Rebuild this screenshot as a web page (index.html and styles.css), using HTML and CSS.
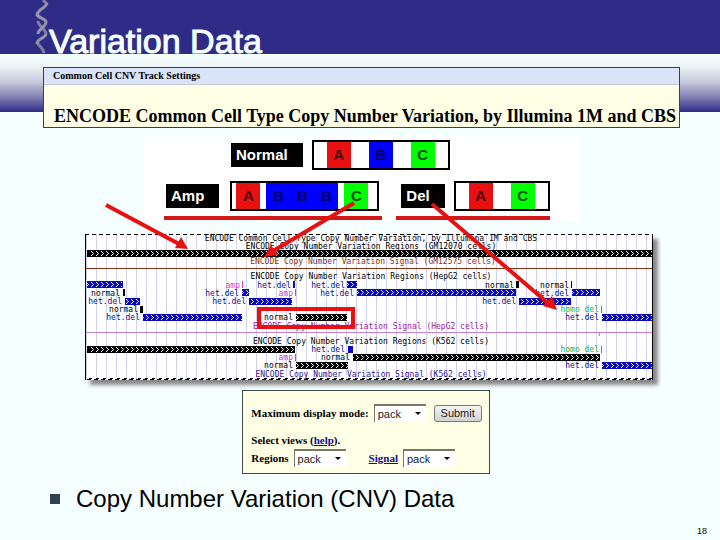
FILE: index.html
```html
<!DOCTYPE html>
<html lang="en">
<head>
    <meta charset="UTF-8">
    <meta name="viewport" content="width=device-width, initial-scale=1.0">
    <title>Variation Data</title>
    <link rel="stylesheet" href="styles.css">
</head>
<body>

    <header class="slide-header">
        <svg class="dna" viewBox="0 0 14 54" aria-hidden="true">
            <path class="back" d="M8 0L12 4M2 14L6 18M3 21C3 26 11 29 11 34M2 42C3 46 8 47 9 53" />
            <path d="M12 3C11 8 2 10 2 15C4 19 11 18 11 22C11 27 3 29 3 34M11 34C10 39 2 38 2 44" />
        </svg>
        <h1>Variation Data</h1>
        <section class="banner">
            <p class="banner-bar">Common Cell CNV Track Settings</p>
            <h2>ENCODE Common Cell Type Copy Number Variation, by Illumina 1M and CBS</h2>
        </section>
    </header>

    <main>
        <div class="figure">
            <div class="diagram">
                <div class="case case-normal">
                    <span class="tag">Normal</span>
                    <div class="strip wide">
                        <span class="gene a">A</span>
                        <span class="gene b">B</span>
                        <span class="gene c">C</span>
                    </div>
                </div>
                <div class="case-row">
                    <div class="case underlined">
                        <span class="tag">Amp</span>
                        <div class="strip tight">
                            <span class="gene a">A</span>
                            <span class="gene-run"><span class="gene b">B</span><span class="gene b">B</span><span class="gene b">B</span></span>
                            <span class="gene c">C</span>
                        </div>
                    </div>
                    <div class="case underlined del">
                        <span class="tag">Del</span>
                        <div class="strip wide">
                            <span class="gene a">A</span>
                            <span class="gene c">C</span>
                        </div>
                    </div>
                </div>
            </div>

            <svg class="tracks" viewBox="0 0 568 146" role="img" aria-label="Genome browser tracks">
                <defs>
                    <pattern id="chevrons" width="5" height="8" patternUnits="userSpaceOnUse">
                        <path d="M1 1L3.5 3.5L1 6" fill="none" stroke="#fff" />
                    </pattern>
                    <pattern id="guides" x="1" width="10" height="146" patternUnits="userSpaceOnUse">
                        <path d="M0.5 0V146" stroke="#d2d2ea" />
                    </pattern>
                    <g id="bar-full">
                        <path class="black" d="M2 0H567V7H2z" />
                        <path class="chev" d="M5 0H567V7H5z" />
                    </g>
                </defs>
                <rect class="paper" width="568" height="146" />
                <rect width="568" height="146" fill="url(#guides)" />

                <!-- titles -->
                <g class="title">
                    <text x="286" y="7">ENCODE Common Cell Type Copy Number Variation, by Illumina 1M and CBS</text>
                    <text x="286" y="15">ENCODE Copy Number Variation Regions (GM12070 cells)</text>
                    <text class="brown" x="288" y="30">ENCODE Copy Number Variation Signal (GM12575 cells)</text>
                    <text x="286" y="45">ENCODE Copy Number Variation Regions (HepG2 cells)</text>
                    <text class="purple" x="286" y="95">ENCODE Copy Number Variation Signal (HepG2 cells)</text>
                    <text x="286" y="110">ENCODE Copy Number Variation Regions (K562 cells)</text>
                    <text class="indigo" x="286" y="143">ENCODE Copy Number Variation Signal (K562 cells)</text>
                </g>
                <path class="rule-brown" d="M1 34.5H567" />
                <path class="rule-purple" d="M1 98.5H567M514.5 98V102" />

                <use href="#bar-full" y="16" />

                <!-- HepG2 -->
                <g transform="translate(0 47)">
                    <path class="blue" d="M2 0H38V7H2zM208 0H210V7H208zM262 0H272V7H262z" />
                    <path class="chev" d="M2 0H37V7H2zM262 0H272V7H262z" />
                    <path class="black" d="M431 0H434V7H431zM486 0H487V7H486z" />
                    <path class="pink-bar" d="M157 0H158V7H157z" />
                    <text class="pink" x="155" y="7">amp</text>
                    <text class="navy" x="206" y="7">het.del</text>
                    <text class="navy" x="260" y="7">het.del</text>
                    <text x="429" y="7">normal</text>
                    <text x="484" y="7">normal</text>
                </g>
                <g transform="translate(0 55)">
                    <path class="black" d="M38 0H40V7H38z" />
                    <path class="blue" d="M157 0H164V7H157zM272 0H431V7H272zM487 0H515V7H487z" />
                    <path class="chev" d="M157 0H164V7H157zM272 0H431V7H272zM487 0H515V7H487z" />
                    <path class="pink-bar" d="M210 0H211V7H210z" />
                    <text x="35" y="7">normal</text>
                    <text class="navy" x="154" y="7">het.del</text>
                    <text class="pink" x="208" y="7">amp</text>
                    <text class="navy" x="269" y="7">het.del</text>
                    <text class="navy" x="484" y="7">het.del</text>
                </g>
                <g transform="translate(0 64)">
                    <path class="blue" d="M40 0H55V7H40zM164 0H207V7H164zM434 0H486V7H434z" />
                    <path class="chev" d="M40 0H55V7H40zM164 0H207V7H164zM434 0H486V7H434z" />
                    <text class="navy" x="37" y="6">het.del</text>
                    <text class="navy" x="161" y="6">het.del</text>
                    <text class="navy" x="431" y="6">het.del</text>
                </g>
                <g transform="translate(0 72)">
                    <path class="black" d="M55 0H58V7H55z" />
                    <path class="green-bar" d="M516 0H517V7H516z" />
                    <text x="53" y="6">normal</text>
                    <text class="green" x="514" y="6">homo del</text>
                </g>
                <g transform="translate(0 80)">
                    <path class="blue" d="M58 0H157V7H58zM517 0H567V7H517z" />
                    <path class="black" d="M211 0H262V7H211z" />
                    <path class="chev" d="M58 0H157V7H58zM211 0H262V7H211zM517 0H567V7H517z" />
                    <text class="navy" x="55" y="6">het.del</text>
                    <text x="208" y="6">normal</text>
                    <text class="navy" x="514" y="6">het.del</text>
                </g>

                <!-- K562 -->
                <g transform="translate(0 112)">
                    <path class="black" d="M2 0H210V7H2z" />
                    <path class="chev" d="M5 0H210V7H5z" />
                    <path class="blue" d="M263 0H268V7H263z" />
                    <path class="green-bar" d="M516 0H517V7H516z" />
                    <text class="navy" x="260" y="6">het.del</text>
                    <text class="green" x="514" y="6">homo del</text>
                </g>
                <g transform="translate(0 120)">
                    <path class="black" d="M268 0H515V7H268z" />
                    <path class="chev" d="M268 0H515V7H268z" />
                    <path class="pink-bar" d="M210 0H211V7H210z" />
                    <text class="pink" x="208" y="6">amp</text>
                    <text x="265" y="6">normal</text>
                </g>
                <g transform="translate(0 128)">
                    <path class="black" d="M211 0H263V7H211z" />
                    <path class="blue" d="M517 0H567V7H517z" />
                    <path class="chev" d="M211 0H263V7H211zM517 0H567V7H517z" />
                    <text x="208" y="6">normal</text>
                    <text class="navy" x="514" y="6">het.del</text>
                </g>

                <!-- torn frame -->
                <path class="frame" d="M0.5 0V146M567.5 0V146" />
                <path class="torn" d="M0 0.5H568M2 145.5H568" />
                <path class="torn-low" d="M4 144.5H568" />
                <rect class="highlight" x="174" y="75" width="94" height="18" />
            </svg>

            <svg class="arrows" viewBox="0 0 568 246" aria-hidden="true">
                <path class="shaft" d="M21 70L94 109M269 68L188 116M347 69L464 169" />
                <path class="head" d="M103 114L90 113L96 102zM179 122L186 110L193 120zM472 175L458 171L467 161z" />
            </svg>
        </div>

        <form class="settings">
            <div class="field-row">
                <label for="maxMode">Maximum display mode:</label>
                <span class="select"><select id="maxMode"><option>pack</option></select></span>
                <button type="button">Submit</button>
            </div>
            <p>Select views (<a href="#help">help</a>).</p>
            <div class="field-row">
                <label for="regions">Regions</label>
                <span class="select"><select id="regions"><option>pack</option></select></span>
                <label class="signal" for="signal"><a href="#signal">Signal</a></label>
                <span class="select"><select id="signal"><option>pack</option></select></span>
            </div>
        </form>

        <ul class="points">
            <li>Copy Number Variation (CNV) Data</li>
        </ul>
    </main>

    <footer>18</footer>

</body>
</html>
```
FILE: styles.css
```css
:root {
    --indigo: #2e2c87;
    --page: #f5ffff;
    --cream: #ffffe6;
    --red: #e81010;
    --blue: #0000ff;
    --green: #00ff00;
}

* {
    box-sizing: border-box;
}

body {
    margin: 0;
    min-height: 100vh;
    display: flex;
    flex-direction: column;
    background: var(--page);
    color: #000;
    font-family: "Liberation Sans", Arial, sans-serif;
}

h1, h2, p, ul {
    margin: 0;
    padding: 0;
}

/* header */
.slide-header {
    position: relative;
    padding: 22px 40px 0 43px;
    background:
        linear-gradient(var(--indigo), var(--indigo)) 0 0 / 100% 54px no-repeat,
        linear-gradient(#f5ffff 0%, #eef5f8 20%, #c9cbdc 48%, #7e7db3 75%, var(--indigo) 100%) 0 54px / 100% 58px no-repeat;
}

.dna {
    position: absolute;
    left: 35px;
    top: 0;
    width: 14px;
    height: 54px;
    fill: none;
    stroke: #9694a8;
    stroke-width: 3;
}

.dna .back {
    stroke: #7f7da0;
}

.slide-header h1 {
    padding-left: 6px;
    color: var(--page);
    font-size: 34px;
    line-height: 38px;
    font-weight: normal;
    -webkit-text-stroke: 1px var(--page);
}

.banner {
    margin-top: 7px;
    height: 61px;
    border: 1px solid #3c3f4a;
    background: var(--cream);
    font-family: "Liberation Serif", "Times New Roman", serif;
}

.banner-bar {
    padding-left: 9px;
    border-bottom: 1px solid #c3cbd6;
    background: #d9e4f8;
    font-size: 10px;
    line-height: 16px;
    font-weight: bold;
}

.banner h2 {
    padding: 20px 0 0 10px;
    font-size: 18px;
    line-height: 22px;
    white-space: nowrap;
}

/* chromosome diagram */
.figure {
    position: relative;
    margin: 7px 67px 0 85px;
}

.diagram {
    display: flex;
    flex-direction: column;
    gap: 11px;
    margin: 0 73px 13px 58px;
    padding: 5px 0 1px 21px;
    background: #fff;
}

.case-row {
    display: flex;
    gap: 14px;
}

.case {
    display: flex;
    align-items: center;
    gap: 9px;
    padding-left: 5px;
}

.case-normal {
    padding-left: 67px;
}

.underlined {
    gap: 11px;
    padding: 0 3px 5px 2px;
    border-bottom: 4px solid #d41818;
}

.del {
    gap: 9px;
    padding: 0 0 5px 5px;
}

.tag {
    padding: 0 15px 0 5px;
    background: #000;
    color: #fff;
    font-size: 15px;
    line-height: 24px;
    font-weight: bold;
}

.strip {
    display: flex;
    border: 2px solid #000;
    background: #fff;
}

.wide {
    gap: 18px;
    padding: 0 13px;
}

.tight {
    gap: 6px;
    padding: 0 9px 0 4px;
}

.gene-run {
    display: flex;
}

.gene {
    width: 24px;
    text-align: center;
    font-size: 15px;
    line-height: 26px;
    font-weight: bold;
}

.a {
    background: var(--red);
    color: #4a0505;
}

.b {
    background: var(--blue);
    color: #00005c;
}

.c {
    background: var(--green);
    color: #044a04;
}

/* genome tracks */
.tracks {
    display: block;
    width: 100%;
    box-shadow: 5px 5px 4px #888;
    font-family: "DejaVu Sans Mono", monospace;
    font-size: 8px;
}

.tracks text {
    text-anchor: end;
}

.tracks .title text {
    text-anchor: middle;
}

.paper { fill: #fff; }
.black { fill: #000; }
.blue { fill: #0808c0; }
.chev { fill: url(#chevrons); }
.navy { fill: #101090; }
.brown { fill: #8a3010; }
.purple { fill: #a020a0; }
.indigo { fill: #301890; }
.pink, .pink-bar { fill: #d040c8; }
.green, .green-bar { fill: #28b428; }
.rule-brown { stroke: #8a3010; }
.rule-purple { stroke: #c080d0; fill: none; }
.frame { stroke: #000; }
.torn { stroke: #000; stroke-dasharray: 4 3; }
.torn-low { stroke: #000; stroke-dasharray: 3 4; }
.highlight { fill: none; stroke: var(--red); stroke-width: 4; }

.arrows {
    position: absolute;
    left: 0;
    top: 0;
    width: 100%;
}

.shaft {
    fill: none;
    stroke: var(--red);
    stroke-width: 4;
}

.head {
    fill: var(--red);
}

/* display settings */
.settings {
    width: fit-content;
    margin: 10px auto 0;
    padding: 13px 7px 6px 8px;
    position: relative;
    left: 6px;
    border: 1px solid #3c4a4a;
    background: var(--cream);
    font-family: "Liberation Serif", "Times New Roman", serif;
    font-size: 11px;
    line-height: 18px;
    font-weight: bold;
}

.settings p {
    margin-top: 10px;
    line-height: 17px;
}

.settings a {
    color: #10108c;
}

.field-row {
    display: flex;
    align-items: center;
    gap: 5px;
}

.signal {
    margin-left: 18px;
}

.select {
    position: relative;
    display: flex;
}

.select::after {
    content: "";
    position: absolute;
    right: 5px;
    top: 8px;
    border: 3px solid transparent;
    border-top-color: #000;
    border-bottom: 0;
}

.settings select {
    width: 52px;
    height: 18px;
    padding: 0 0 0 3px;
    appearance: none;
    border: 0;
    border-top: 2px solid #77776c;
    border-left: 1px solid #77776c;
    border-radius: 0;
    background: #fff;
    color: #222;
    font-family: "Liberation Sans", Arial, sans-serif;
    font-size: 11px;
}

.settings button {
    width: 48px;
    height: 17px;
    margin-left: 3px;
    padding: 0;
    border: 1px solid #777;
    border-radius: 3px;
    background: linear-gradient(#f6f6f6, #d2d2d2);
    color: #222;
    font-family: "Liberation Sans", Arial, sans-serif;
    font-size: 11px;
}

/* bullets */
.points {
    padding: 10px 50px 0;
    list-style: none;
}

.points li {
    display: flex;
    align-items: center;
    gap: 16px;
    font-size: 24px;
    line-height: 30px;
}

.points li::before {
    content: "";
    width: 10px;
    height: 10px;
    background: #2f4050;
}

footer {
    margin-top: auto;
    padding: 0 13px 3px;
    text-align: right;
    font-size: 9px;
    line-height: 11px;
}
```
